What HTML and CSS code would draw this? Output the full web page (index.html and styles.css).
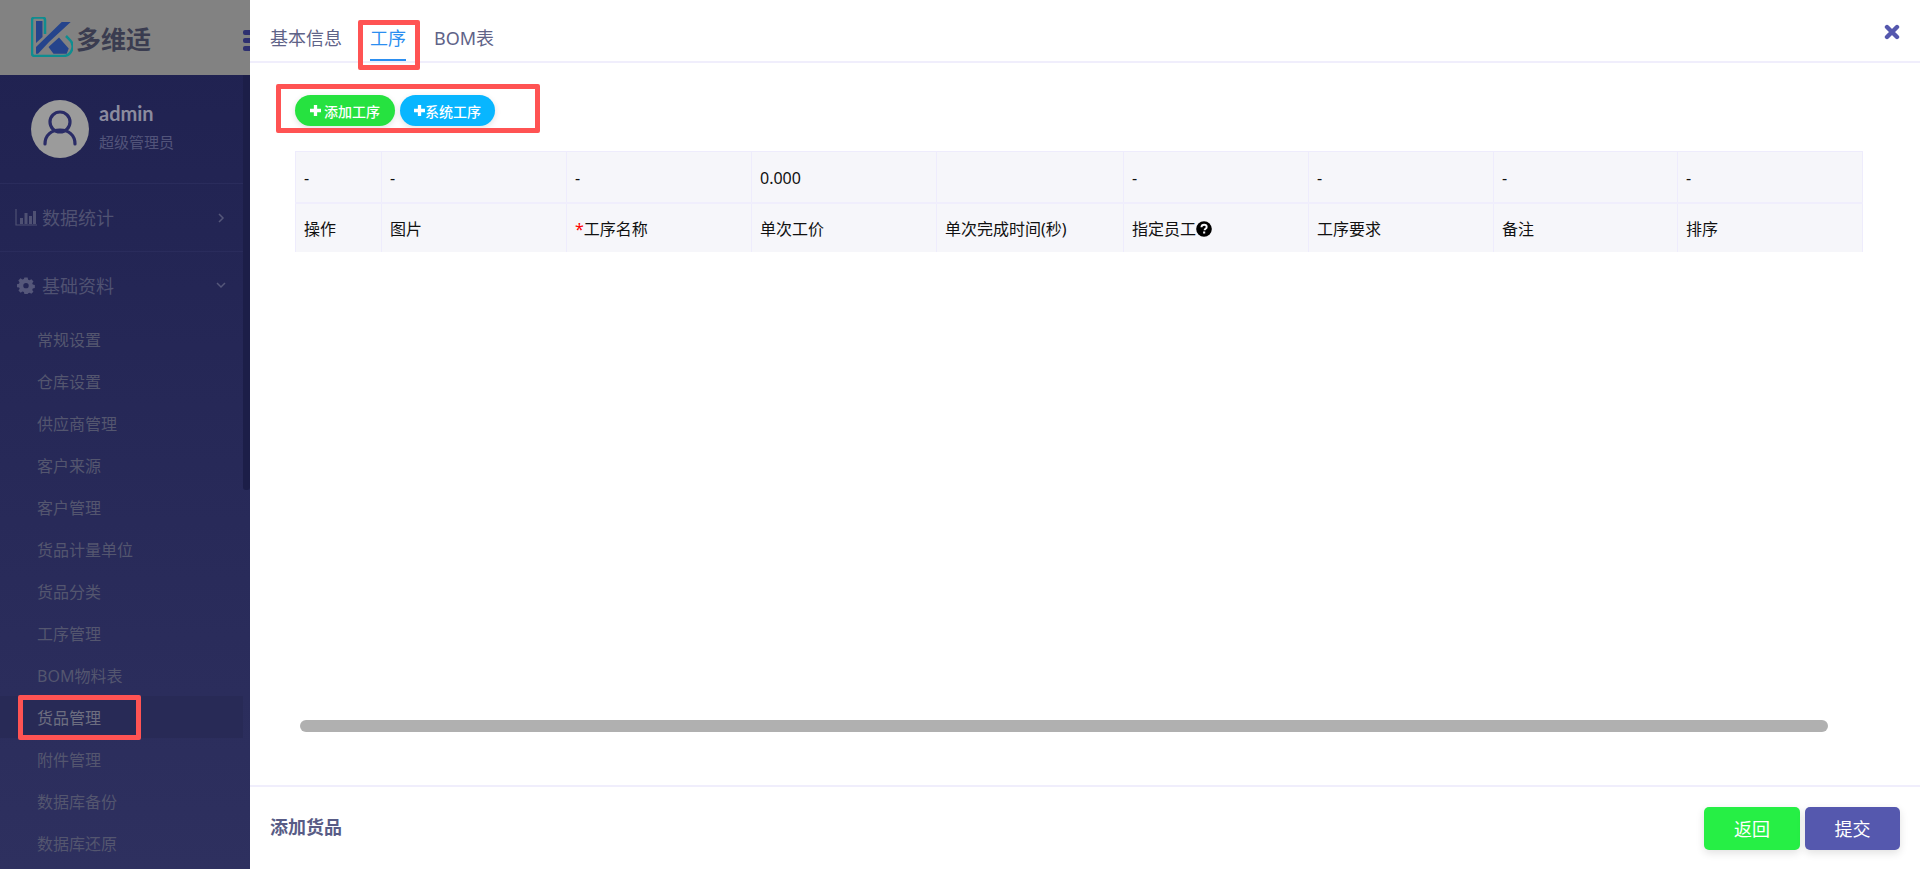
FILE: index.html
```html
<!DOCTYPE html>
<html lang="zh-CN">
<head>
<meta charset="utf-8">
<title>添加货品</title>
<link rel="stylesheet" href="styles.css">
</head>
<body>
<div class="app">
  <aside class="sidebar">
    <header class="brand">
      <svg class="logo" viewBox="0 0 42 40" width="42" height="40">
        <path d="M14 17V3a2.500 2.500 0 0 0-2.500-2.500H3.500A2.500 2.500 0 0 0 1 3v33.500A2.500 2.500 0 0 0 3.500 39H32a9.500 9.500 0 0 0 7-16l-4-4" fill="none" stroke="#0f8d90" stroke-width="2.500"/>
        <path d="M5 4h6.500v16L5 26zM5 30L30.700 5h9L18 25 7 36.700H5zM17.500 30L28 20.500l9.700 11-2 5.200H22.500z" fill="#25448c"/>
      </svg>
      <span class="brand-name">多维适</span>
      <span class="burger"><i></i><i></i><i></i></span>
    </header>
    <div class="side-body">
      <section class="profile">
        <svg class="avatar" viewBox="0 0 58 58" width="58" height="58">
          <circle cx="29" cy="29" r="29" fill="#9b9b9b"/>
          <circle cx="29" cy="22" r="10" fill="none" stroke="#2a2c66" stroke-width="3.200"/>
          <path d="M14 44c0-9 6.500-14 15-14s15 5 15 14" fill="none" stroke="#2a2c66" stroke-width="3.200" stroke-linecap="round"/>
        </svg>
        <div class="who">
          <div class="who-name">admin</div>
          <div class="who-role">超级管理员</div>
        </div>
      </section>
      <nav>
        <div class="group">
          <svg class="group-icon" viewBox="0 0 22 18" width="22" height="18"><path d="M1 1v16h21" fill="none" stroke="#4f5173" stroke-width="1.200"/><path d="M5 10h3v6H5zM9.500 5h3v11h-3zM14 8h3v8h-3zM18 3h3v13h-3z" fill="#4f5173"/></svg>
          <span class="group-label">数据统计</span>
          <svg class="chev" viewBox="0 0 12 12" width="12" height="12"><path d="M4 2l4 4-4 4" fill="none" stroke="#55577a" stroke-width="1.500"/></svg>
        </div>
        <div class="group group-open">
          <svg class="group-icon" viewBox="0 0 20 20" width="20" height="20"><path fill-rule="evenodd" fill="#55577a" d="M8 1h4l.6 2.600 1.700.7 2.300-1.400 2.500 2.800-1.500 2.100.7 1.700 2.500.6v3.700l-2.500.6-.7 1.700 1.500 2.200-2.600 2.500-2.200-1.400-1.700.7L12 21H8l-.6-2.400-1.700-.7-2.200 1.400-2.700-2.600 1.500-2.100-.7-1.700L-1 12.600V9l2.400-.6.7-1.700L.6 4.600l2.700-2.700 2.200 1.400 1.900-.7zM10 7.500a3.300 3.300 0 1 0 0 6.600 3.300 3.300 0 0 0 0-6.600z" transform="translate(1.800 1.800) scale(.82)"/></svg>
          <span class="group-label">基础资料</span>
          <svg class="chev" viewBox="0 0 12 12" width="12" height="12"><path d="M2 4l4 4 4-4" fill="none" stroke="#55577a" stroke-width="1.500"/></svg>
        </div>
        <ul class="sub">
          <li>常规设置</li>
          <li>仓库设置</li>
          <li>供应商管理</li>
          <li>客户来源</li>
          <li>客户管理</li>
          <li>货品计量单位</li>
          <li>货品分类</li>
          <li>工序管理</li>
          <li>BOM物料表</li>
          <li class="active">货品管理</li>
          <li>附件管理</li>
          <li>数据库备份</li>
          <li>数据库还原</li>
        </ul>
      </nav>
    </div>
    <span class="side-thumb"></span>
  </aside>

  <main class="panel">
    <div class="tabs">
      <span class="tab">基本信息</span>
      <span class="tab tab-on">工序</span>
      <span class="tab">BOM表</span>
      <svg class="close" viewBox="0 0 16 16" width="16" height="16"><path d="M3 3l10 10M13 3L3 13" stroke="#5558ae" stroke-width="4.400" stroke-linecap="round"/></svg>
    </div>
    <div class="content">
      <div class="tools">
        <button class="pill pill-green"><svg class="plus plus-gap" viewBox="0 0 10 10" width="11" height="11"><path d="M3.500 0h3v3.500H10v3H6.500V10h-3V6.500H0v-3h3.500z" fill="#fff"/></svg>添加工序</button>
        <button class="pill pill-blue"><svg class="plus" viewBox="0 0 10 10" width="11" height="11"><path d="M3.500 0h3v3.500H10v3H6.500V10h-3V6.500H0v-3h3.500z" fill="#fff"/></svg>系统工序</button>
      </div>
      <div class="table-wrap">
        <table class="grid">
          <colgroup>
            <col class="c1"><col class="c2"><col class="c2"><col class="c2"><col class="c5"><col class="c2"><col class="c2"><col class="c8"><col class="c2">
          </colgroup>
          <tr class="row-values"><td>-</td><td>-</td><td>-</td><td>0.000</td><td></td><td>-</td><td>-</td><td>-</td><td>-</td></tr>
          <tr class="row-heads"><td>操作</td><td>图片</td><td><span class="req">*</span>工序名称</td><td>单次工价</td><td>单次完成时间(秒)</td><td>指定员工<svg class="help" viewBox="0 0 16 16" width="16" height="16"><circle cx="8" cy="8" r="7.800" fill="#000"/><path d="M5.400 6.200C5.500 4.600 6.600 3.700 8.100 3.700c1.500 0 2.600.9 2.600 2.200 0 1.900-2.100 1.900-2.100 3.400" fill="none" stroke="#f6f6fa" stroke-width="1.900"/><rect x="7.100" y="10.500" width="2.100" height="2" fill="#f6f6fa"/></svg></td><td>工序要求</td><td>备注</td><td>排序</td></tr>
        </table>
      </div>
      <div class="hscroll"><span class="hthumb"></span></div>
    </div>
    <footer class="foot">
      <span class="foot-title">添加货品</span>
      <div class="foot-btns">
        <button class="btn btn-green">返回</button>
        <button class="btn btn-indigo">提交</button>
      </div>
    </footer>
  </main>
</div>
<span class="mark mark-tab"></span>
<span class="mark mark-tools"></span>
<span class="mark mark-side"></span>
</body>
</html>
```
FILE: styles.css
```css
* { box-sizing: border-box; }
html, body { margin: 0; height: 100%; overflow: hidden; }
body { font-family: "Noto Sans", "Noto Sans CJK SC", sans-serif; background: #fff; position: relative; }

.app { display: flex; height: 869px; }

/* sidebar */
.sidebar { width: 250px; flex: none; position: relative; overflow: hidden; display: flex; flex-direction: column; background: linear-gradient(180deg, #1f2150 0%, #2e305f 100%); }
.brand { height: 75px; flex: none; background: #828282; display: flex; align-items: center; padding-left: 31px; position: relative; }
.logo { flex: none; margin-top: -1px; }
.brand-name { font-size: 25px; font-weight: 700; color: #3a3c50; margin-left: 3px; }
.burger { position: absolute; left: 243px; top: 30px; width: 20px; display: flex; flex-direction: column; gap: 3px; }
.burger i { display: block; height: 5px; background: #2e3070; border-radius: 2px; }
.side-body { flex: 1; }
.profile { height: 109px; display: flex; align-items: flex-start; padding: 25px 0 0 31px; border-bottom: 1px solid #2a2c5c; }
.avatar { flex: none; }
.who { margin-left: 10px; }
.who-name { font-family: Lato, "Noto Sans", sans-serif; font-size: 20px; font-weight: 700; line-height: 24px; margin-top: 1px; color: #8b8b9e; }
.who-role { font-size: 15px; line-height: 20px; margin-top: 7px; color: #52547a; }
.group { height: 68px; display: flex; align-items: center; padding-left: 15px; padding-bottom: 2px; position: relative; }
.group:first-child { border-bottom: 1px solid #2a2c5c; }
.group-open { height: 66px; padding-bottom: 0; }
.group-icon { flex: none; width: 22px; }
.group-label { font-size: 18px; margin-left: 5px; color: #505272; }
.chev { position: absolute; left: 215px; top: 50%; margin-top: -6px; }
.sub { list-style: none; margin: 0; padding: 0; }
.sub li { height: 42px; line-height: 44px; padding-left: 37px; font-size: 16px; color: #54566f; width: 243px; }
.sub li.active { background: #282a56; color: #6d6e80; }
.side-thumb { position: absolute; left: 243px; top: 75px; width: 7px; height: 415px; background: #1c1e48; border-radius: 0 0 3px 3px; }

/* panel */
.panel { flex: 1; min-width: 0; display: flex; flex-direction: column; background: #fff; }
.tabs { height: 63px; flex: none; border-bottom: 2px solid #f0eefc; display: flex; align-items: stretch; padding-left: 20px; gap: 28px; position: relative; }
.tab { font-size: 18px; line-height: 76px; height: 61px; padding: 0; color: #5f6388; }
.tab-on { color: #2b8ef0; position: relative; }
.tab-on::after { content: ""; position: absolute; left: 0; right: 0; bottom: 0; height: 2px; background: #2b8ef0; }
.close { position: absolute; right: 20px; top: 24px; }

.content { flex: 1; min-height: 0; display: flex; flex-direction: column; padding: 0 47px 0 45px; }
.tools { height: 88px; flex: none; display: flex; align-items: flex-start; padding-top: 32px; gap: 5px; }
.pill { height: 31px; border: 0; border-radius: 16px; color: #fff; font-family: inherit; font-size: 14px; font-weight: 500; padding: 0; display: flex; align-items: center; justify-content: center; box-shadow: 0 2px 6px rgba(0,0,0,.12); }
.plus { flex: none; }
.plus-gap { margin-right: 3px; }
.pill-green { width: 100px; background: #26e240; }
.pill-blue { width: 95px; background: #08b6ff; }
.table-wrap { flex: 1; min-height: 0; }
.grid { border-collapse: collapse; table-layout: fixed; width: 1567px; background: #f6f6fa; font-size: 16px; color: #111; }
.grid td { border: 1px solid #eeecfc; border-bottom: 0; padding: 0 8px; overflow: hidden; white-space: nowrap; }
.row-values td { height: 51px; padding-top: 2px; border-bottom: 2px solid #f0eefc; }
.row-heads td { height: 49px; padding-top: 1px; }
.c1 { width: 86px; }
.c2 { width: 185px; }
.c5 { width: 187px; }
.c8 { width: 184px; }
.req { color: #f00; }
.help { vertical-align: -2px; }
.hscroll { height: 65px; flex: none; padding: 0 0 0 5px; }
.hthumb { display: block; width: 1528px; height: 12px; border-radius: 6px; background: #b0b0b0; }

.foot { height: 84px; flex: none; border-top: 2px solid #f0eefc; display: flex; align-items: center; justify-content: space-between; padding: 0 20px; }
.foot-title { font-size: 18px; font-weight: 700; color: #585c86; margin-bottom: 4px; }
.foot-btns { display: flex; gap: 5px; }
.btn { height: 43px; border: 0; border-radius: 5px; color: #fff; font-family: inherit; font-size: 18px; padding: 0; box-shadow: 0 3px 8px rgba(0,0,0,.12); }
.btn-green { width: 96px; background: #26ef45; }
.btn-indigo { width: 95px; background: #5558ae; }

/* red annotation boxes drawn over the screenshot */
.mark { position: absolute; border: 5px solid #ff5353; border-radius: 2px; pointer-events: none; }
.mark-tab { left: 358px; top: 20px; width: 62px; height: 50px; }
.mark-tools { left: 276px; top: 84px; width: 264px; height: 49px; }
.mark-side { left: 18px; top: 695px; width: 123px; height: 45px; }
```
